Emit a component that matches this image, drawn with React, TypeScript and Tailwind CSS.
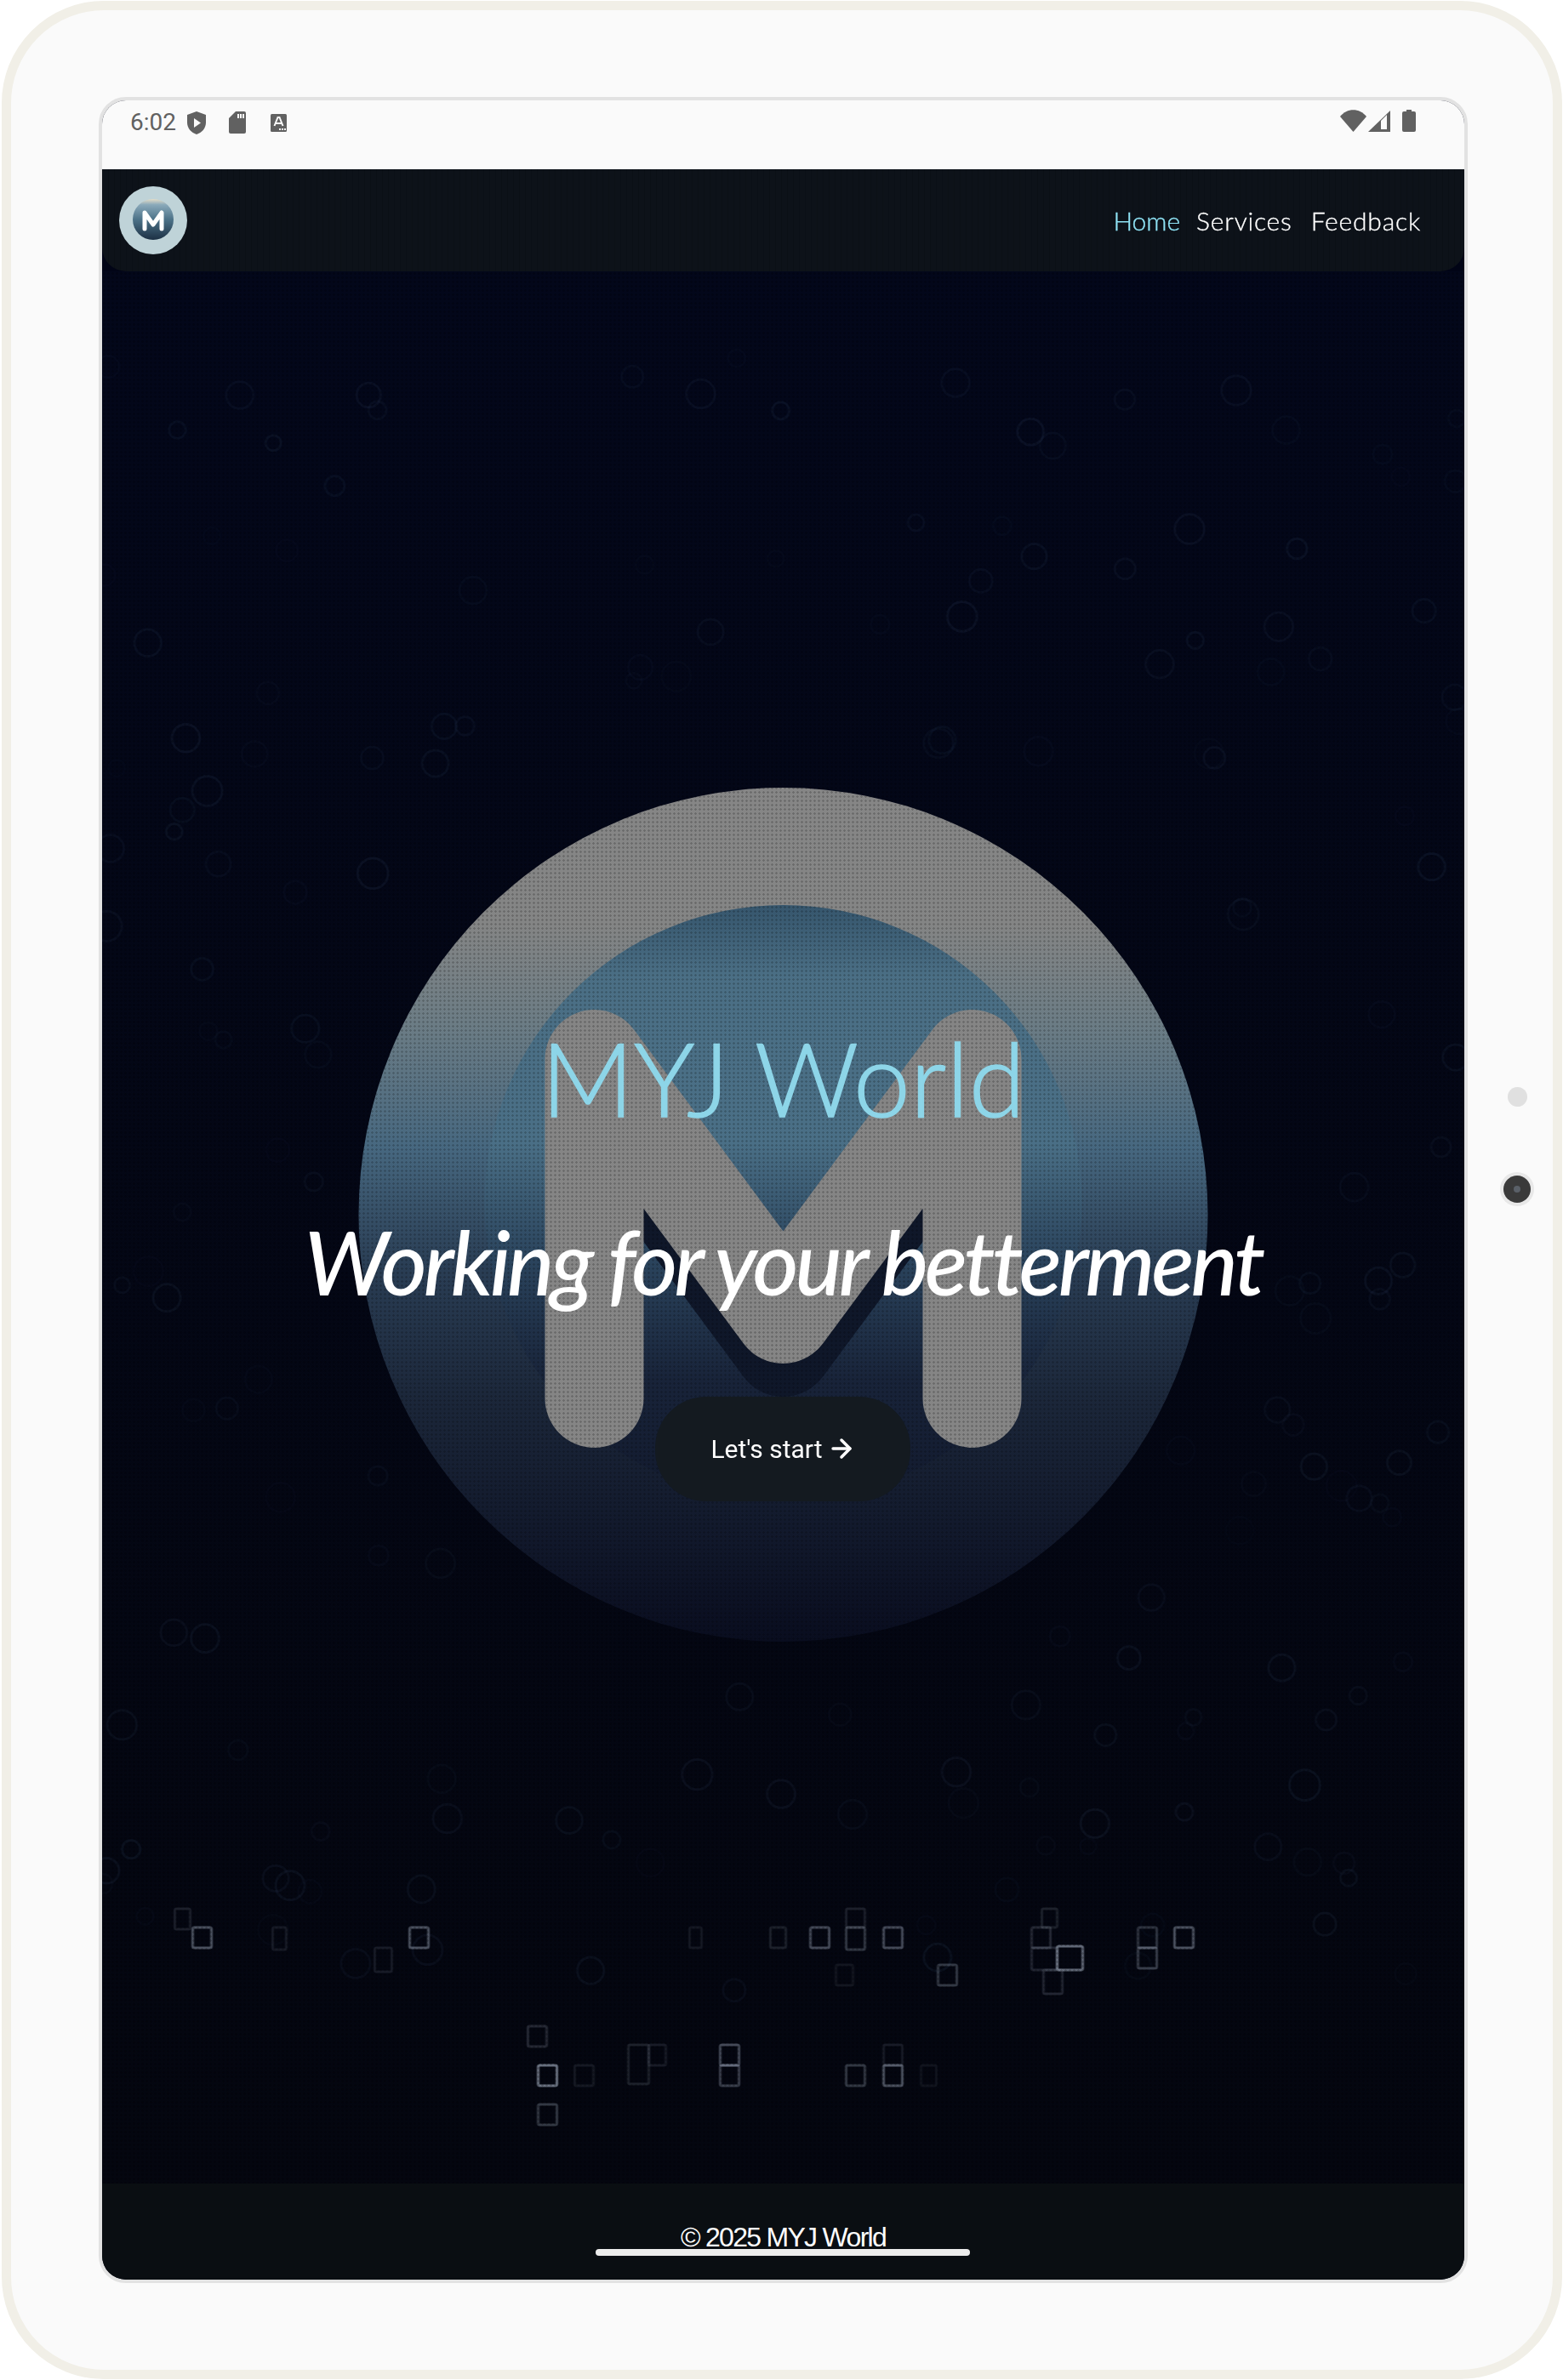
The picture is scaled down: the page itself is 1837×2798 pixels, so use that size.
import React from 'react';
import { ArrowRight } from 'lucide-react';

// faint rings behind the hero, [x, y, r, opacity] in hero coordinates
function makeRings() {
  const rings: number[][] = [];
  let seed = 7;
  const rnd = () => {
    seed = (seed * 16807) % 2147483647;
    return seed / 2147483647;
  };
  for (let i = 0; i < 260; i++) {
    const x = rnd() * 1600;
    const y = 100 + rnd() * 1950;
    if (Math.hypot(x - 800, y - 1109) < 540) continue;
    rings.push([x, y, 9 + rnd() * 9, 0.04 + rnd() * 0.11]);
  }
  return rings;
}

const rings = makeRings();

// squares near the bottom of the hero, [x, y, w, h, opacity] in page coordinates
const squares = [
  [226, 2266, 22, 24, 0.42], [205, 2244, 18, 24, 0.14], [320, 2266, 16, 26, 0.12], [481, 2266, 22, 24, 0.42],
  [440, 2290, 20, 28, 0.12], [810, 2266, 14, 24, 0.1], [905, 2266, 18, 24, 0.15], [952, 2266, 22, 24, 0.38],
  [994, 2266, 22, 26, 0.28], [994, 2244, 22, 22, 0.14], [1038, 2266, 22, 24, 0.38], [1380, 2266, 22, 24, 0.42],
  [1337, 2266, 22, 24, 0.26], [1337, 2290, 22, 24, 0.3], [1242, 2288, 30, 28, 0.55], [1212, 2266, 22, 24, 0.2],
  [1212, 2290, 30, 26, 0.18], [1224, 2244, 18, 22, 0.15], [1226, 2316, 22, 28, 0.18], [1102, 2310, 22, 24, 0.28],
  [982, 2310, 20, 24, 0.09], [632, 2428, 22, 24, 0.6], [620, 2382, 22, 24, 0.2], [632, 2474, 22, 24, 0.28],
  [675, 2428, 22, 24, 0.11], [738, 2404, 24, 46, 0.15], [762, 2404, 20, 24, 0.12], [846, 2404, 22, 24, 0.38],
  [846, 2428, 22, 24, 0.32], [994, 2428, 22, 24, 0.28], [1038, 2428, 22, 24, 0.42], [1038, 2404, 22, 24, 0.12],
  [1082, 2428, 18, 24, 0.08],
];

function BigLogo() {
  return (
    <svg className="absolute inset-0 h-full w-full" viewBox="120 319 1600 2248" aria-hidden="true">
      <defs>
        <linearGradient id="ring" x1="0" y1="0" x2="0" y2="1">
          <stop offset="0" stopColor="#868686" />
          <stop offset="0.16" stopColor="#848585" />
          <stop offset="0.28" stopColor="#6b7c85" />
          <stop offset="0.42" stopColor="#476880" />
          <stop offset="0.56" stopColor="#2a3e55" />
          <stop offset="0.72" stopColor="#1b2639" />
          <stop offset="0.88" stopColor="#11182b" />
          <stop offset="1" stopColor="#090d1f" />
        </linearGradient>
        <linearGradient id="disc" x1="0" y1="0" x2="0" y2="1">
          <stop offset="0" stopColor="#36566d" />
          <stop offset="0.12" stopColor="#4b6f85" />
          <stop offset="0.4" stopColor="#4a6f86" />
          <stop offset="0.6" stopColor="#2a435c" />
          <stop offset="0.8" stopColor="#182339" />
          <stop offset="1" stopColor="#121a2e" />
        </linearGradient>
      </defs>
      <g className="blur-[0.7px]">
        {rings.map(([x, y, r, o], i) => (
          <circle key={i} cx={x + 120} cy={y + 319} r={r} fill="none" stroke="#3a5072" strokeWidth="3" opacity={o} />
        ))}
        {squares.map(([x, y, w, h, o], i) => (
          <rect key={i} x={x} y={y} width={w} height={h} rx="2" fill="none" stroke="#aeb9cc" strokeWidth="3" opacity={o} />
        ))}
      </g>
      <ellipse cx="920" cy="1428" rx="499" ry="502" fill="url(#ring)" />
      <ellipse cx="920" cy="1414" rx="351" ry="350" fill="url(#disc)" />
      <path d="M698 1284 L920 1584 L1142 1284" fill="none" stroke="#0f1729" strokeWidth="116" strokeLinejoin="round" />
      <path
        d="M698 1644 V1245 L920 1545 L1142 1245 V1644"
        fill="none"
        stroke="#858585"
        strokeWidth="116"
        strokeLinecap="round"
        strokeLinejoin="round"
      />
    </svg>
  );
}

function SmallLogo() {
  return (
    <svg width="80" height="80" viewBox="0 0 80 80" aria-hidden="true">
      <defs>
        <linearGradient id="small" x1="0" y1="0" x2="0" y2="1">
          <stop offset="0" stopColor="#e4ddc8" />
          <stop offset="0.14" stopColor="#8aa9ba" />
          <stop offset="0.5" stopColor="#4c7288" />
          <stop offset="1" stopColor="#1c3044" />
        </linearGradient>
      </defs>
      <circle cx="40" cy="40" r="40" fill="#bfd3d8" />
      <circle cx="40" cy="39" r="24" fill="url(#small)" />
      <path d="M30 50 V31 L40 45 L50 31 V50" fill="none" stroke="#fff" strokeWidth="5" strokeLinecap="round" strokeLinejoin="round" />
    </svg>
  );
}

function StatusBar() {
  return (
    <div className="flex h-[81px] items-start justify-between bg-[#fafafa] pl-[33px] pr-[57px] pt-[11px] text-[#616161]">
      <div className="flex items-center">
        <span className="w-[67px] font-['Roboto',sans-serif] text-[28px] leading-[30px]">6:02</span>
        <svg width="22" height="27" viewBox="0 0 22 27" fill="#616161" aria-hidden="true">
          <path d="M11 0 L22 4 V13 C22 20 17 25 11 27 C5 25 0 20 0 13 V4 Z" />
          <path d="M8 8 L16 13.500 L8 19 Z" fill="#fafafa" />
        </svg>
        <svg className="ml-[27px]" width="20" height="26" viewBox="0 0 20 26" aria-hidden="true">
          <path d="M8 0 H18 A2 2 0 0 1 20 2 V24 A2 2 0 0 1 18 26 H2 A2 2 0 0 1 0 24 V8 Z" fill="#616161" />
          <path d="M10 3 h2 v5 h-2 z M13 3 h2 v5 h-2 z M16 3 h2 v5 h-2 z" fill="#fafafa" />
        </svg>
        <svg className="ml-[29px]" width="19" height="21" viewBox="0 0 19 21" aria-hidden="true">
          <rect width="19" height="21" rx="1.500" fill="#616161" />
          <path d="M4.500 14 L8.500 4 H10.500 L14.500 14 M6.200 11 H12.800" fill="none" stroke="#fafafa" strokeWidth="2" />
          <path d="M10 17 h2 v2 h-2 z M13 17 h2 v2 h-2 z M16 17 h2 v2 h-2 z" fill="#fafafa" />
        </svg>
      </div>
      <div className="flex items-center">
        <svg width="31" height="26" viewBox="0 0 31 26" aria-hidden="true">
          <path d="M0 8 C8 -2.500 23 -2.500 31 8 L15.500 26 Z" fill="#616161" />
        </svg>
        <svg className="ml-[2px]" width="26" height="25" viewBox="0 0 26 25" aria-hidden="true">
          <path d="M26 0 V25 H0 Z" fill="#616161" />
          <path d="M15 12 L22 5 V22 H15 Z" fill="#fafafa" />
        </svg>
        <svg className="ml-[14px]" width="16" height="26" viewBox="0 0 16 26" aria-hidden="true">
          <path d="M5 0 H11 V2 H14 A2 2 0 0 1 16 4 V24 A2 2 0 0 1 14 26 H2 A2 2 0 0 1 0 24 V4 A2 2 0 0 1 2 2 H5 Z" fill="#616161" />
        </svg>
      </div>
    </div>
  );
}

export default function App() {
  return (
    <div className="h-[2798px] w-[1837px] bg-white pl-[2px] pt-[1px]">
      <div className="flex h-[2796px] w-[1834px] rounded-[120px] border-[11px] border-[#f1efe7] bg-[#fafafa] pl-[103px] pt-[102px]">
        <div className="h-[2570px] w-[1609px] shrink-0 overflow-hidden rounded-[32px] border-4 border-[#e2e2e2]">
          <div className="relative flex h-full flex-col bg-[#010416]">
            <StatusBar />

            <nav className="relative z-10 flex h-[120px] items-center justify-between rounded-b-[28px] bg-[#0d1219] bg-[linear-gradient(90deg,rgba(0,0,0,0.12)_1px,transparent_1px)] bg-[length:7px_7px] pl-[20px] pr-[51px]">
              <SmallLogo />
              <div className="flex items-center gap-[22px] font-['Lato',sans-serif] text-[30px] font-light tracking-[0.8px] text-white [-webkit-text-stroke:0.3px]">
                <a className="mr-[-3px] tracking-normal text-[#8fe3f5]">Home</a>
                <a>Services</a>
                <a>Feedback</a>
              </div>
            </nav>

            <main className="relative flex flex-1 flex-col items-center overflow-hidden bg-gradient-to-b from-[#03071a] to-[#04060f]">
              <BigLogo />
              <div className="absolute inset-0 bg-[radial-gradient(rgba(0,0,0,0.2)_1px,transparent_1.5px)] bg-[length:5px_5px]" />
              <div className="relative flex flex-col items-center pt-[876px]">
                <h1 className="font-['Lato',sans-serif] text-[120px] leading-[1.2] font-light text-[#8dd5e8] [-webkit-text-stroke:1.5px_#8dd5e8]">MYJ World</h1>
                <p className="mt-[82px] font-['Lato',sans-serif] text-[104px] leading-[1.2] font-medium tracking-[-4px] text-white italic">
                  Working for your betterment
                </p>
                <button className="mt-[96px] flex h-[123px] w-[300px] items-center justify-center gap-[5px] rounded-[60px] bg-[#141a20] font-['Roboto',sans-serif] text-[30px] text-white">
                  Let's start
                  <ArrowRight size={34} strokeWidth={2.5} />
                </button>
              </div>
            </main>

            <footer className="relative flex h-[113px] items-start justify-center bg-[#0a0e12] pt-[47px]">
              <span className="font-['Liberation_Sans',sans-serif] text-[32px] leading-[33px] tracking-[-1.7px] text-white">© 2025 MYJ World</span>
              <div className="absolute bottom-[28px] left-[580px] h-[8px] w-[440px] rounded-full bg-[#ececec]" />
            </footer>
          </div>
        </div>

        <div className="flex flex-1 flex-col items-center pl-[16px] pt-[1164px]">
          <div className="h-[23px] w-[23px] rounded-full bg-[#e0e0e0]" />
          <div className="mt-[77px] flex h-[40px] w-[40px] items-center justify-center rounded-full bg-[#e8e8e8]">
            <div className="flex h-[32px] w-[32px] items-center justify-center rounded-full bg-[#3a3a3a]">
              <div className="h-[8px] w-[8px] rounded-full bg-[#5a6068]" />
            </div>
          </div>
        </div>
      </div>
    </div>
  );
}
